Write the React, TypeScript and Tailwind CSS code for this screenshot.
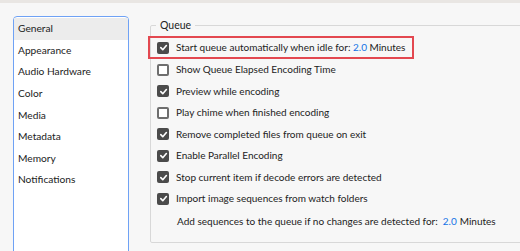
import React from 'react';

const font = { fontFamily: 'Lato, "Noto Sans", sans-serif' };

const categories = ['General', 'Appearance', 'Audio Hardware', 'Color', 'Media', 'Metadata', 'Memory', 'Notifications'];

const options = [
  { label: 'Show Queue Elapsed Encoding Time', checked: false },
  { label: 'Preview while encoding', checked: true },
  { label: 'Play chime when finished encoding', checked: false },
  { label: 'Remove completed files from queue on exit', checked: true },
  { label: 'Enable Parallel Encoding', checked: true },
  { label: 'Stop current item if decode errors are detected', checked: true },
  { label: 'Import image sequences from watch folders', checked: true },
];

function Checkbox({ checked }: { checked: boolean }) {
  if (!checked) {
    return <span className="w-[12px] h-[12px] rounded-[2px] border-2 border-[#6e6e6e] bg-white shrink-0" />;
  }
  return (
    <span className="w-[12px] h-[12px] rounded-[2px] bg-[#4b4b4b] shrink-0 flex items-center justify-center">
      <svg width="9" height="9" viewBox="0 0 10 10" fill="none">
        <path d="M2 5.2 L4.2 7.4 L8.2 2.8" stroke="white" strokeWidth="1.8" strokeLinecap="round" strokeLinejoin="round" />
      </svg>
    </span>
  );
}

export default function App() {
  return (
    <div className="w-[520px] h-[251px] overflow-hidden bg-[#f7f7f7] text-[#222222]" style={font}>
      <div className="h-[3px] bg-[#e9e6e3]" />
      <div className="flex">
        {/* Sidebar */}
        <div className="ml-[13px] mt-[13px] w-[116px] h-[260px] bg-white border border-[#6fa2f5] rounded-[4px] py-[1px] shrink-0">
          {categories.map((c, i) => (
            <div
              key={c}
              className={`h-[21.6px] flex items-center pl-[4px] text-[10.2px] whitespace-nowrap ${i === 0 ? 'bg-[#ececec]' : ''}`}
            >
              {c}
            </div>
          ))}
        </div>

        {/* Queue group */}
        <fieldset className="ml-[21px] mt-[15px] w-[400px] h-[225px] border border-[#d8d8d8] rounded-[2px] px-0 pb-0 shrink-0">
          <legend className="ml-[5px] px-[4px] text-[10.5px] leading-[14px]">Queue</legend>
          <div className="ml-[-3px] mt-[4px] w-[266px] h-[23px] border-2 border-[#e34850] flex items-center gap-[7px] pl-[7px] text-[10px] whitespace-nowrap">
            <Checkbox checked />
            <span>
              Start queue automatically when idle for: <span className="text-[#1473e6]">2.0</span> Minutes
            </span>
          </div>
          {options.map((o) => (
            <div key={o.label} className="h-[21.5px] flex items-center gap-[7px] pl-[6px] text-[10px] whitespace-nowrap">
              <Checkbox checked={o.checked} />
              <span>{o.label}</span>
            </div>
          ))}
          <div className="h-[23px] flex items-center pl-[26px] text-[10px] whitespace-nowrap">
            <span>Add sequences to the queue if no changes are detected for:</span>
            <span className="ml-[5px] text-[#1473e6]">2.0</span>
            <span className="ml-[3px]">Minutes</span>
          </div>
        </fieldset>
      </div>
    </div>
  );
}
